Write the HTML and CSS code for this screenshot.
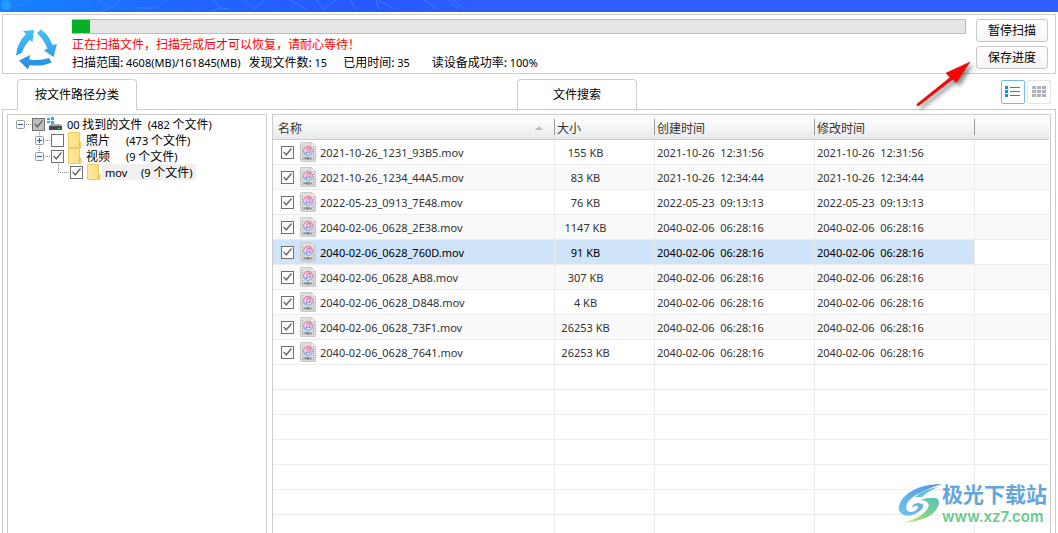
FILE: index.html
```html
<!DOCTYPE html>
<html lang="zh-CN">
<head>
<meta charset="utf-8">
<title>文件恢复</title>
<link rel="stylesheet" href="styles.css">
</head>
<body>
<svg class="defs" width="0" height="0" aria-hidden="true">
  <defs>
    <linearGradient id="blue" gradientUnits="userSpaceOnUse" x1="0" y1="0" x2="0" y2="40"><stop offset="0" stop-color="#4cc2fb"/><stop offset="1" stop-color="#238ce4"/></linearGradient>
    <linearGradient id="note" x1="0" y1="0" x2="0" y2="1"><stop offset="0" stop-color="#fb6b84"/><stop offset=".5" stop-color="#c08ae4"/><stop offset="1" stop-color="#4cbcf2"/></linearGradient>
    <linearGradient id="sheet" x1="0" y1="0" x2="1" y2="1"><stop offset="0" stop-color="#e2e2e2"/><stop offset="1" stop-color="#d6d6d6"/></linearGradient>
    <linearGradient id="fold" x1="0" y1="0" x2="1" y2="0"><stop offset="0" stop-color="#ffe9a0"/><stop offset="1" stop-color="#fbdc7c"/></linearGradient>
    <symbol id="mov" viewBox="0 0 16 20">
      <path d="M1 .5h10.500l4 4V19.500H1.500q-1 0-1-1V1.500q0-1 1-1z" fill="url(#sheet)" stroke="#c8c8c8"/>
      <path d="M11 .5v4h4.500z" fill="#fafafa" stroke="#bbb" stroke-width=".6"/>
      <path d="M2.500 3v15M13.500 7v11" stroke="#a8a8a8" stroke-dasharray="1 1"/>
      <circle cx="8" cy="9" r="4.300" fill="#ece6f2" stroke="url(#note)" stroke-width="1.200"/>
      <path d="M7 11V7l3-.7v4" fill="none" stroke="#e0628c" stroke-width="1"/>
      <circle cx="6.300" cy="11" r="1" fill="#9b7be8"/><circle cx="9.300" cy="10.300" r="1" fill="#9b7be8"/>
      <path d="M4 17.500V15.500l1.200 1 1.200-1v2M7.400 15.500h1.400v1.800H7.400zM9.800 15.500l.9 2 .9-2" fill="none" stroke="#666" stroke-width=".8"/>
    </symbol>
    <symbol id="folder" viewBox="0 0 14 16">
      <path d="M.5.5h11v10h1.500v5H.5z" fill="url(#fold)" stroke="#efcb5b"/>
      <path d="M11.500 10.500v4.500" stroke="#e5b93c"/>
    </symbol>
  </defs>
</svg>

<header class="banner">
  <svg width="500" height="12" viewBox="0 0 500 12" aria-hidden="true">
    <circle cx="6" cy="5" r="5" fill="#229bff"/>
    <path d="M10 4L18 0M9 8l14-4 5-4M98 0l13 8 10-8M111 8l-14 4M135 8h22l10-8M214 0l6 8 10 1M220 8l-8 4M244 0l10 9 10-9M290 0l16 9M316 0l8 9 12-9M351 0l4 9M376 0l3 9M378 0l17 9M424 0l14 9M449 0l9 9M454 0l9 9" fill="none" stroke="#3f7dff"/>
  </svg>
</header>

<section class="status">
  <svg class="recycle" width="42" height="42" viewBox="0 0 42 42" aria-label="扫描中">
    <g fill="url(#blue)">
      <path d="M8 2L19 1 17.500 13 14.500 11Q9 17 6.500 24L1 26.500Q2 14 11 5z"/>
      <path d="M22 4L26 .5Q34 6 37.500 16L42 15 38.500 28 29 21.500 32.500 19.500Q29 11 22 4z"/>
      <path d="M4 31.500L15 26 14.500 30.500Q25 32 34 29L36.500 33.500Q27 38 14.500 36L13 40.500z"/>
    </g>
  </svg>
  <div class="info">
    <div class="bar" role="progressbar" aria-valuenow="2" aria-label="扫描进度"><div class="fill" style="width:2%"></div></div>
    <p class="notice">正在扫描文件，扫描完成后才可以恢复，请耐心等待！</p>
    <p class="stats"><span>扫描范围: <b>4608(MB)/161845(MB)</b></span><span>发现文件数: <b>15</b></span><span class="spaced">已用时间: <b>35</b></span><span class="spaced rate">读设备成功率: <b>100%</b></span></p>
  </div>
  <div class="actions">
    <button class="btn">暂停扫描</button>
    <button class="btn">保存进度</button>
  </div>
  <svg class="arrow" width="66" height="54" viewBox="0 0 66 54" aria-hidden="true">
    <path d="M3 46L36 19.500 32 15 56 4 42.500 24.500 38.500 21.500 5 47.500Q2 48.500 3 46z" fill="#fa0505" stroke="#b03030" stroke-width=".6"/>
  </svg>
</section>

<nav class="tabs">
  <div class="half"><button class="tab">按文件路径分类</button></div>
  <div class="half"><button class="tab">文件搜索</button>
    <div class="views">
      <button class="view on" aria-label="列表"><svg width="16" height="12" viewBox="0 0 16 12"><path d="M0 0h3v3H0zM0 4h3v3H0zM0 8h3v3H0zM5 1h10v1H5zM5 5h10v1H5zM5 9h10v1H5z" fill="#1c86e8"/></svg></button>
      <button class="view" aria-label="图标"><svg width="14" height="12" viewBox="0 0 14 12"><path d="M0 0h4v3H0zM5 0h4v3H5zM10 0h4v3h-4zM0 4h4v3H0zM5 4h4v3H5zM10 4h4v3h-4zM0 8h4v3H0zM5 8h4v3H5zM10 8h4v3h-4z" fill="#adb1b8"/></svg></button>
    </div>
  </div>
</nav>

<main class="content">
  <ul class="tree">
    <li class="node">
      <button class="toggle" aria-label="收起"><svg width="16" height="16" viewBox="0 0 16 16"><path d="M10 8.500h6" stroke="#888" stroke-dasharray="1 1"/><rect x=".5" y="4.500" width="8" height="8" rx="1" fill="#f6f6f6" stroke="#999"/><path d="M2 8.500h5" stroke="#3250b0"/></svg></button>
      <input type="checkbox" class="check part" id="n0" checked>
      <svg class="drive" width="16" height="14" viewBox="0 0 16 14"><path d="M0 1h3v2H0zM4 0h3v3H4zM0 4h3v2H0zM4 4h3v3H4z" fill="#18b4f4"/><path d="M4 7h9l2 2H2z" fill="#a8a8a8"/><path d="M2 9h13v4H2z" fill="#484c50"/><path d="M11 11h2v1h-2z" fill="#3be04a"/></svg>
      <label class="name" for="n0"><b>00</b> 找到的文件 &nbsp;<b>(482</b> 个文件<b>)</b></label>
    </li>
    <li class="node l2">
      <button class="toggle" aria-label="展开"><svg width="16" height="16" viewBox="0 0 16 16"><path d="M4.500 0v16M10 8.500h6" stroke="#888" stroke-dasharray="1 1"/><rect x=".5" y="4.500" width="8" height="8" rx="1" fill="#f6f6f6" stroke="#999"/><path d="M2 8.500h5M4.500 6v5" stroke="#3250b0"/></svg></button>
      <input type="checkbox" class="check" id="n1">
      <svg class="folder" width="14" height="16"><use href="#folder"/></svg>
      <label class="name" for="n1">照片</label><span class="count"><b>(473</b> 个文件<b>)</b></span>
    </li>
    <li class="node l2">
      <button class="toggle" aria-label="收起"><svg width="16" height="16" viewBox="0 0 16 16"><path d="M4.500 0v8M10 8.500h6" stroke="#888" stroke-dasharray="1 1"/><rect x=".5" y="4.500" width="8" height="8" rx="1" fill="#f6f6f6" stroke="#999"/><path d="M2 8.500h5" stroke="#3250b0"/></svg></button>
      <input type="checkbox" class="check" id="n2" checked>
      <svg class="folder" width="14" height="16"><use href="#folder"/></svg>
      <label class="name" for="n2">视频</label><span class="count"><b>(9</b> 个文件<b>)</b></span>
    </li>
    <li class="node l3">
      <svg width="16" height="16" viewBox="0 0 16 16" aria-hidden="true"><path d="M4.500 0v8M4 8.500h12" stroke="#888" stroke-dasharray="1 1"/></svg>
      <input type="checkbox" class="check" id="n3" checked>
      <svg class="folder" width="14" height="16"><use href="#folder"/></svg>
      <span class="picked"><label for="n3"><b>mov</b></label><span class="count"><b>(9</b> 个文件<b>)</b></span></span>
    </li>
  </ul>

  <div class="list">
    <table class="files">
      <colgroup><col class="c-name"><col class="c-size"><col class="c-date"><col class="c-date"><col></colgroup>
      <thead>
        <tr><th><div class="sorted">名称<svg width="8" height="4" viewBox="0 0 8 4"><path d="M0 4l4-4 4 4z" fill="#bbb"/></svg></div></th><th>大小</th><th>创建时间</th><th>修改时间</th><th></th></tr>
      </thead>
      <tbody>
        <tr><td><div class="file"><input type="checkbox" class="check" id="f1" checked><svg width="16" height="20"><use href="#mov"/></svg><label for="f1">2021-10-26_1231_93B5.mov</label></div></td><td class="size">155 KB</td><td>2021-10-26 &nbsp;12:31:56</td><td>2021-10-26 &nbsp;12:31:56</td><td></td></tr>
        <tr><td><div class="file"><input type="checkbox" class="check" id="f2" checked><svg width="16" height="20"><use href="#mov"/></svg><label for="f2">2021-10-26_1234_44A5.mov</label></div></td><td class="size">83 KB</td><td>2021-10-26 &nbsp;12:34:44</td><td>2021-10-26 &nbsp;12:34:44</td><td></td></tr>
        <tr><td><div class="file"><input type="checkbox" class="check" id="f3" checked><svg width="16" height="20"><use href="#mov"/></svg><label for="f3">2022-05-23_0913_7E48.mov</label></div></td><td class="size">76 KB</td><td>2022-05-23 &nbsp;09:13:13</td><td>2022-05-23 &nbsp;09:13:13</td><td></td></tr>
        <tr><td><div class="file"><input type="checkbox" class="check" id="f4" checked><svg width="16" height="20"><use href="#mov"/></svg><label for="f4">2040-02-06_0628_2E38.mov</label></div></td><td class="size">1147 KB</td><td>2040-02-06 &nbsp;06:28:16</td><td>2040-02-06 &nbsp;06:28:16</td><td></td></tr>
        <tr class="selected"><td><div class="file"><input type="checkbox" class="check" id="f5" checked><svg width="16" height="20"><use href="#mov"/></svg><label for="f5">2040-02-06_0628_760D.mov</label></div></td><td class="size">91 KB</td><td>2040-02-06 &nbsp;06:28:16</td><td>2040-02-06 &nbsp;06:28:16</td><td></td></tr>
        <tr><td><div class="file"><input type="checkbox" class="check" id="f6" checked><svg width="16" height="20"><use href="#mov"/></svg><label for="f6">2040-02-06_0628_AB8.mov</label></div></td><td class="size">307 KB</td><td>2040-02-06 &nbsp;06:28:16</td><td>2040-02-06 &nbsp;06:28:16</td><td></td></tr>
        <tr><td><div class="file"><input type="checkbox" class="check" id="f7" checked><svg width="16" height="20"><use href="#mov"/></svg><label for="f7">2040-02-06_0628_D848.mov</label></div></td><td class="size">4 KB</td><td>2040-02-06 &nbsp;06:28:16</td><td>2040-02-06 &nbsp;06:28:16</td><td></td></tr>
        <tr><td><div class="file"><input type="checkbox" class="check" id="f8" checked><svg width="16" height="20"><use href="#mov"/></svg><label for="f8">2040-02-06_0628_73F1.mov</label></div></td><td class="size">26253 KB</td><td>2040-02-06 &nbsp;06:28:16</td><td>2040-02-06 &nbsp;06:28:16</td><td></td></tr>
        <tr><td><div class="file"><input type="checkbox" class="check" id="f9" checked><svg width="16" height="20"><use href="#mov"/></svg><label for="f9">2040-02-06_0628_7641.mov</label></div></td><td class="size">26253 KB</td><td>2040-02-06 &nbsp;06:28:16</td><td>2040-02-06 &nbsp;06:28:16</td><td></td></tr>
      </tbody>
      <tbody class="blank" aria-hidden="true">
        <tr><td></td><td></td><td></td><td></td><td></td></tr>
        <tr><td></td><td></td><td></td><td></td><td></td></tr>
        <tr><td></td><td></td><td></td><td></td><td></td></tr>
        <tr><td></td><td></td><td></td><td></td><td></td></tr>
        <tr><td></td><td></td><td></td><td></td><td></td></tr>
        <tr><td></td><td></td><td></td><td></td><td></td></tr>
        <tr><td></td><td></td><td></td><td></td><td></td></tr>
      </tbody>
    </table>
  </div>
</main>

<div class="mark">
  <svg width="44" height="42" viewBox="0 0 44 42" aria-hidden="true">
    <defs><linearGradient id="g1" x1="1" y1="0" x2="0" y2="1"><stop offset="0" stop-color="#5b8fdc"/><stop offset="1" stop-color="#6cc6f0"/></linearGradient><linearGradient id="g2" x1="1" y1="0" x2="0" y2="1"><stop offset="0" stop-color="#58bfc0"/><stop offset=".5" stop-color="#7fd08a"/><stop offset="1" stop-color="#ecea62"/></linearGradient></defs>
    <path d="M44 1Q18 1 5 15Q-3 26 4 31Q12 36 23 27Q29 21 20 20Q14 21 14 25Q17 22 20 23Q21 25 17 28Q9 31 8 24Q9 12 44 1z" fill="url(#g1)"/>
    <path d="M22 17Q30 14 38 15Q44 18 38 27Q30 38 4 40Q24 35 30 25Q33 18 22 17z" fill="url(#g2)"/>
    <path d="M17 14Q25 6 40 4Q29 9 24 14z" fill="#62c2dc"/>
  </svg>
  <div><div class="mark-name">极光下载站</div><div class="mark-url">www.xz7.com</div></div>
</div>
</body>
</html>
```
FILE: styles.css
```css
* { box-sizing: border-box; }
html, body { height: 100%; }
body {
  margin: 0;
  display: flex;
  flex-direction: column;
  overflow: hidden;
  position: relative;
  background: #fff;
  color: #000;
  font: 12px/18px "Noto Sans CJK SC", sans-serif;
}
b { font: 11px/16px "Noto Sans", sans-serif; }
button { padding: 0; font: inherit; color: inherit; }
svg { display: block; flex: none; }
.defs { position: absolute; }
p { margin: 0; }

.banner {
  flex: none;
  height: 12px;
  background: linear-gradient(90deg, #1583ff, #1f68ff 170px, #2659ff 360px, #305dff 490px);
}

.status {
  flex: none;
  position: relative;
  display: flex;
  height: 60px;
  margin: 2px 2px 0;
  padding: 4px 7px 4px 12px;
  border: 1px solid #ccc;
}
.recycle { margin: 10px 15px 0 0; }
.info { flex: 1; min-width: 0; white-space: nowrap; }
.bar { height: 15px; border: 1px solid #bcbcbc; border-left-width: 0; background: #e6e6e6; }
.fill { height: 100%; background: #06b025; }
.notice { margin-top: 1px; color: #f00; }
.stats { display: flex; gap: 8px; }
.spaced { margin-left: 8px; }
.rate { margin-left: 14px; }
.actions { display: flex; flex-direction: column; gap: 4px; margin-left: 10px; }
.btn {
  width: 72px;
  height: 23px;
  padding-bottom: 2px;
  border: 1px solid #c8c8c8;
  border-radius: 3px;
  background: linear-gradient(#fff, #f5f5f5);
}
.arrow { position: absolute; right: 75px; top: 43px; filter: drop-shadow(3px 3px 2px #0007); }

.tabs { flex: none; display: flex; padding-left: 17px; height: 36px; align-items: flex-end; z-index: 1; }
.half { display: flex; flex: 1; justify-content: space-between; }
.half:first-child { flex: 0 0 500px; }
.tab {
  width: 120px;
  height: 31px;
  padding-bottom: 2px;
  border: 1px solid #ccc;
  border-bottom-color: #fff;
  border-radius: 4px 4px 0 0;
  background: #fff;
}
.half + .half .tab { height: 30px; margin-bottom: 1px; border-bottom: 0; }
.views { display: flex; gap: 2px; padding: 1px 7px 0 0; }
.view {
  display: grid;
  place-items: center;
  width: 24px;
  height: 24px;
  border: 1px solid #e4e4e4;
  border-radius: 2px;
  background: #fff;
}
.view.on { border-color: #73b8f5; }

.content {
  flex: 1;
  display: flex;
  gap: 5px;
  min-height: 0;
  margin: -1px 2px 0;
  padding: 4px 4px 0;
  border: 1px solid #ccc;
  border-bottom: 0;
}
.tree {
  flex: 0 0 260px;
  margin: 0;
  padding: 1px 0 0 8px;
  list-style: none;
  border: 1px solid #ccc;
  border-bottom: 0;
  white-space: nowrap;
}
.node { display: flex; align-items: center; height: 16px; }
.l2 { padding-left: 19px; }
.l3 { padding-left: 38px; }
.toggle { border: 0; background: none; }
.drive { margin-left: 2px; }
.folder { margin-left: 4px; }
.name { margin-left: 4px; line-height: 16px; }
.l2 .name { width: 40px; }
.picked { display: flex; margin-left: 1px; padding: 0 3px; height: 16px; line-height: 16px; background: #f0f0f0; }
.picked label { width: 36px; }

.check {
  flex: none;
  appearance: none;
  width: 13px;
  height: 13px;
  margin: 0;
  border: 1px solid #707070;
  background: #fff;
}
.check:checked::before {
  content: "";
  display: block;
  height: 100%;
  background: #666;
  clip-path: polygon(10% 53%, 19% 45%, 38% 66%, 82% 13%, 91% 22%, 39% 86%);
}
.check.part { background: #c0c0c0; }

.list { flex: 1; min-width: 0; overflow: hidden; border: 1px solid #ccc; border-bottom: 0; padding-right: 1px; }
.files { width: 100%; table-layout: fixed; border-collapse: separate; border-spacing: 0; white-space: nowrap; color: #333; }
.c-name { width: 282px; }
.c-size { width: 100px; }
.c-date { width: 160px; }
th {
  height: 25px;
  padding: 2px 2px 0;
  font-weight: 400;
  text-align: left;
  border-bottom: 1px solid #ccc;
  background: linear-gradient(90deg, #888, #aaa) right center / 1px 16px no-repeat, linear-gradient(#fbfbfb 30%, #e7e8ea);
}
th:first-child { padding-left: 5px; }
th:last-child { background: linear-gradient(#fbfbfb 30%, #e7e8ea); }
.sorted { display: flex; align-items: center; justify-content: space-between; padding-right: 10px; }
td {
  height: 25px;
  padding: 2px 2px 0;
  font: 11px/16px "Noto Sans", sans-serif;
  border-right: 1px solid #ececec;
  border-bottom: 1px solid #ececec;
}
td:first-child { padding: 0 0 0 8px; }
td:last-child { border-right: 0; }
tbody:not(.blank) tr:nth-child(even) td { background: #fafafa; }
tbody .size { padding-right: 40px; text-align: center; }
.selected td:not(:last-child) { background: #cfe4f8; color: #000; }
.file { display: flex; align-items: center; height: 24px; }
.file svg { margin: 0 4px 0 6px; }
.file label { padding-top: 2px; }

.mark { position: absolute; right: 11px; bottom: 6px; display: flex; color: #64a5dd; }
.mark-name { font: 700 21px/24px "Liberation Sans", "Noto Sans CJK SC", sans-serif; }
.mark-url { font: 600 15px/20px Inter, sans-serif; color: #68c98c; }
```
